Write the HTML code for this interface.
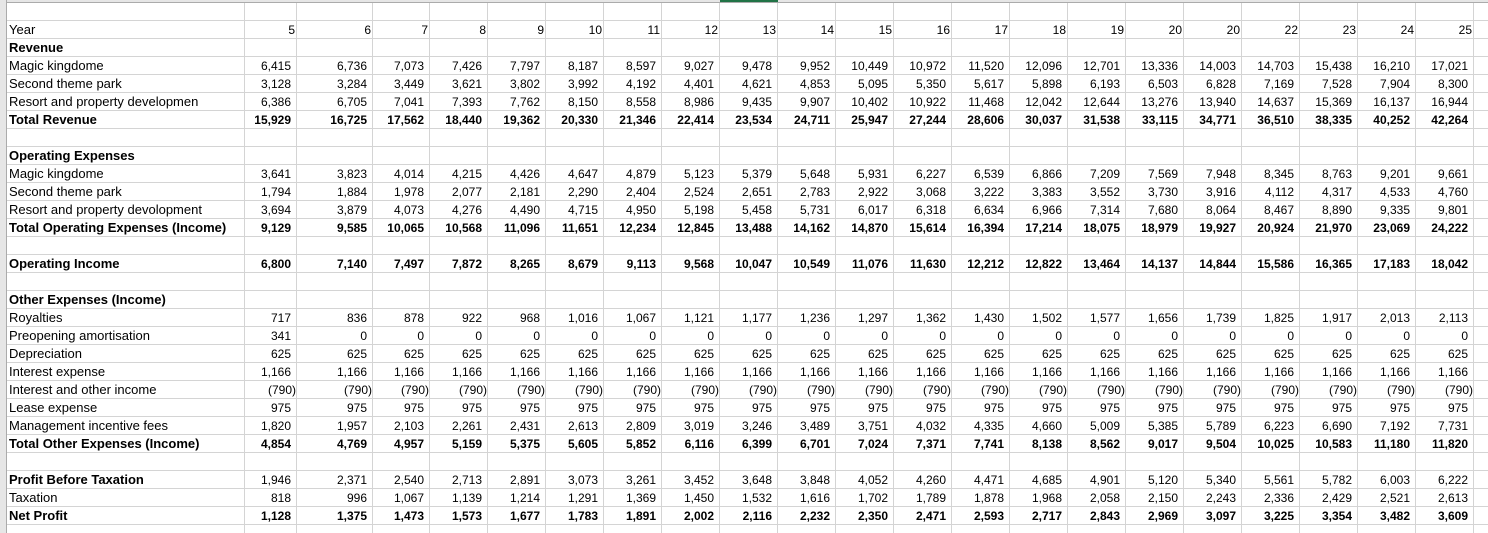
<!DOCTYPE html>
<html><head><meta charset="utf-8">
<style>
html,body{margin:0;padding:0;background:#fff;width:1488px;height:533px;overflow:hidden;position:relative;font-family:"Liberation Sans",Arial,sans-serif;color:#000}
.top{position:absolute;left:0;top:0;width:1488px;height:2px;background:#e6e6e6;border-bottom:1px solid #ababab}
.green{position:absolute;left:720px;top:0;width:58px;height:2px;background:#217346}
.left{position:absolute;left:0;top:0;width:6px;height:533px;background:#e6e6e6;border-right:1px solid #ababab}
.hl{position:absolute;left:7px;top:3px;width:1481px;height:530px;background:repeating-linear-gradient(to bottom,transparent 0,transparent 17px,#d4d4d4 17px,#d4d4d4 18px)}
.v{position:absolute;top:3px;height:530px;width:1px;background:#d4d4d4}
.g{position:absolute;left:7px;top:3px;display:grid;grid-template-columns:238px 52px 76px 57px repeat(18,58px) 14px;grid-auto-rows:18px;font-size:12px}
.g>div>div{line-height:18px;height:18px;text-align:right;padding-right:6px;white-space:nowrap;overflow:visible;box-sizing:border-box}
.r{display:contents}
.g>div>div.l{text-align:left;padding-left:2px;padding-right:0;font-size:13px}
.b>div{font-weight:bold}
.h>div{padding-right:2px!important}
.p>div{padding-right:1px!important}
.e{grid-column:1/-1}
</style></head><body>
<div class="hl"></div>
<div class="top"></div><div class="green"></div>
<div class="left"></div>
<div class="v" style="left:244px"></div><div class="v" style="left:296px"></div><div class="v" style="left:372px"></div><div class="v" style="left:429px"></div>
<div class="v" style="left:487px"></div><div class="v" style="left:545px"></div><div class="v" style="left:603px"></div><div class="v" style="left:661px"></div><div class="v" style="left:719px"></div><div class="v" style="left:777px"></div><div class="v" style="left:835px"></div><div class="v" style="left:893px"></div><div class="v" style="left:951px"></div><div class="v" style="left:1009px"></div><div class="v" style="left:1067px"></div><div class="v" style="left:1125px"></div><div class="v" style="left:1183px"></div><div class="v" style="left:1241px"></div><div class="v" style="left:1299px"></div><div class="v" style="left:1357px"></div><div class="v" style="left:1415px"></div><div class="v" style="left:1473px"></div>
<div class="g">
<div class="r"><div class="e"></div></div>
<div class="r h"><div class="l">Year</div><div>5</div><div>6</div><div>7</div><div>8</div><div>9</div><div>10</div><div>11</div><div>12</div><div>13</div><div>14</div><div>15</div><div>16</div><div>17</div><div>18</div><div>19</div><div>20</div><div>20</div><div>22</div><div>23</div><div>24</div><div>25</div><div></div></div>
<div class="r b"><div class="l e">Revenue</div></div>
<div class="r"><div class="l">Magic kingdome</div><div>6,415</div><div>6,736</div><div>7,073</div><div>7,426</div><div>7,797</div><div>8,187</div><div>8,597</div><div>9,027</div><div>9,478</div><div>9,952</div><div>10,449</div><div>10,972</div><div>11,520</div><div>12,096</div><div>12,701</div><div>13,336</div><div>14,003</div><div>14,703</div><div>15,438</div><div>16,210</div><div>17,021</div><div></div></div>
<div class="r"><div class="l">Second theme park</div><div>3,128</div><div>3,284</div><div>3,449</div><div>3,621</div><div>3,802</div><div>3,992</div><div>4,192</div><div>4,401</div><div>4,621</div><div>4,853</div><div>5,095</div><div>5,350</div><div>5,617</div><div>5,898</div><div>6,193</div><div>6,503</div><div>6,828</div><div>7,169</div><div>7,528</div><div>7,904</div><div>8,300</div><div></div></div>
<div class="r"><div class="l">Resort and property developmen</div><div>6,386</div><div>6,705</div><div>7,041</div><div>7,393</div><div>7,762</div><div>8,150</div><div>8,558</div><div>8,986</div><div>9,435</div><div>9,907</div><div>10,402</div><div>10,922</div><div>11,468</div><div>12,042</div><div>12,644</div><div>13,276</div><div>13,940</div><div>14,637</div><div>15,369</div><div>16,137</div><div>16,944</div><div></div></div>
<div class="r b"><div class="l">Total Revenue</div><div>15,929</div><div>16,725</div><div>17,562</div><div>18,440</div><div>19,362</div><div>20,330</div><div>21,346</div><div>22,414</div><div>23,534</div><div>24,711</div><div>25,947</div><div>27,244</div><div>28,606</div><div>30,037</div><div>31,538</div><div>33,115</div><div>34,771</div><div>36,510</div><div>38,335</div><div>40,252</div><div>42,264</div><div></div></div>
<div class="r"><div class="e"></div></div>
<div class="r b"><div class="l e">Operating Expenses</div></div>
<div class="r"><div class="l">Magic kingdome</div><div>3,641</div><div>3,823</div><div>4,014</div><div>4,215</div><div>4,426</div><div>4,647</div><div>4,879</div><div>5,123</div><div>5,379</div><div>5,648</div><div>5,931</div><div>6,227</div><div>6,539</div><div>6,866</div><div>7,209</div><div>7,569</div><div>7,948</div><div>8,345</div><div>8,763</div><div>9,201</div><div>9,661</div><div></div></div>
<div class="r"><div class="l">Second theme park</div><div>1,794</div><div>1,884</div><div>1,978</div><div>2,077</div><div>2,181</div><div>2,290</div><div>2,404</div><div>2,524</div><div>2,651</div><div>2,783</div><div>2,922</div><div>3,068</div><div>3,222</div><div>3,383</div><div>3,552</div><div>3,730</div><div>3,916</div><div>4,112</div><div>4,317</div><div>4,533</div><div>4,760</div><div></div></div>
<div class="r"><div class="l">Resort and property devolopment</div><div>3,694</div><div>3,879</div><div>4,073</div><div>4,276</div><div>4,490</div><div>4,715</div><div>4,950</div><div>5,198</div><div>5,458</div><div>5,731</div><div>6,017</div><div>6,318</div><div>6,634</div><div>6,966</div><div>7,314</div><div>7,680</div><div>8,064</div><div>8,467</div><div>8,890</div><div>9,335</div><div>9,801</div><div></div></div>
<div class="r b"><div class="l">Total Operating Expenses (Income)</div><div>9,129</div><div>9,585</div><div>10,065</div><div>10,568</div><div>11,096</div><div>11,651</div><div>12,234</div><div>12,845</div><div>13,488</div><div>14,162</div><div>14,870</div><div>15,614</div><div>16,394</div><div>17,214</div><div>18,075</div><div>18,979</div><div>19,927</div><div>20,924</div><div>21,970</div><div>23,069</div><div>24,222</div><div></div></div>
<div class="r"><div class="e"></div></div>
<div class="r b"><div class="l">Operating Income</div><div>6,800</div><div>7,140</div><div>7,497</div><div>7,872</div><div>8,265</div><div>8,679</div><div>9,113</div><div>9,568</div><div>10,047</div><div>10,549</div><div>11,076</div><div>11,630</div><div>12,212</div><div>12,822</div><div>13,464</div><div>14,137</div><div>14,844</div><div>15,586</div><div>16,365</div><div>17,183</div><div>18,042</div><div></div></div>
<div class="r"><div class="e"></div></div>
<div class="r b"><div class="l e">Other Expenses (Income)</div></div>
<div class="r"><div class="l">Royalties</div><div>717</div><div>836</div><div>878</div><div>922</div><div>968</div><div>1,016</div><div>1,067</div><div>1,121</div><div>1,177</div><div>1,236</div><div>1,297</div><div>1,362</div><div>1,430</div><div>1,502</div><div>1,577</div><div>1,656</div><div>1,739</div><div>1,825</div><div>1,917</div><div>2,013</div><div>2,113</div><div></div></div>
<div class="r"><div class="l">Preopening amortisation</div><div>341</div><div>0</div><div>0</div><div>0</div><div>0</div><div>0</div><div>0</div><div>0</div><div>0</div><div>0</div><div>0</div><div>0</div><div>0</div><div>0</div><div>0</div><div>0</div><div>0</div><div>0</div><div>0</div><div>0</div><div>0</div><div></div></div>
<div class="r"><div class="l">Depreciation</div><div>625</div><div>625</div><div>625</div><div>625</div><div>625</div><div>625</div><div>625</div><div>625</div><div>625</div><div>625</div><div>625</div><div>625</div><div>625</div><div>625</div><div>625</div><div>625</div><div>625</div><div>625</div><div>625</div><div>625</div><div>625</div><div></div></div>
<div class="r"><div class="l">Interest expense</div><div>1,166</div><div>1,166</div><div>1,166</div><div>1,166</div><div>1,166</div><div>1,166</div><div>1,166</div><div>1,166</div><div>1,166</div><div>1,166</div><div>1,166</div><div>1,166</div><div>1,166</div><div>1,166</div><div>1,166</div><div>1,166</div><div>1,166</div><div>1,166</div><div>1,166</div><div>1,166</div><div>1,166</div><div></div></div>
<div class="r p"><div class="l">Interest and other income</div><div>(790)</div><div>(790)</div><div>(790)</div><div>(790)</div><div>(790)</div><div>(790)</div><div>(790)</div><div>(790)</div><div>(790)</div><div>(790)</div><div>(790)</div><div>(790)</div><div>(790)</div><div>(790)</div><div>(790)</div><div>(790)</div><div>(790)</div><div>(790)</div><div>(790)</div><div>(790)</div><div>(790)</div><div></div></div>
<div class="r"><div class="l">Lease expense</div><div>975</div><div>975</div><div>975</div><div>975</div><div>975</div><div>975</div><div>975</div><div>975</div><div>975</div><div>975</div><div>975</div><div>975</div><div>975</div><div>975</div><div>975</div><div>975</div><div>975</div><div>975</div><div>975</div><div>975</div><div>975</div><div></div></div>
<div class="r"><div class="l">Management incentive fees</div><div>1,820</div><div>1,957</div><div>2,103</div><div>2,261</div><div>2,431</div><div>2,613</div><div>2,809</div><div>3,019</div><div>3,246</div><div>3,489</div><div>3,751</div><div>4,032</div><div>4,335</div><div>4,660</div><div>5,009</div><div>5,385</div><div>5,789</div><div>6,223</div><div>6,690</div><div>7,192</div><div>7,731</div><div></div></div>
<div class="r b"><div class="l">Total Other Expenses (Income)</div><div>4,854</div><div>4,769</div><div>4,957</div><div>5,159</div><div>5,375</div><div>5,605</div><div>5,852</div><div>6,116</div><div>6,399</div><div>6,701</div><div>7,024</div><div>7,371</div><div>7,741</div><div>8,138</div><div>8,562</div><div>9,017</div><div>9,504</div><div>10,025</div><div>10,583</div><div>11,180</div><div>11,820</div><div></div></div>
<div class="r"><div class="e"></div></div>
<div class="r"><div class="l" style="font-weight:bold">Profit Before Taxation</div><div>1,946</div><div>2,371</div><div>2,540</div><div>2,713</div><div>2,891</div><div>3,073</div><div>3,261</div><div>3,452</div><div>3,648</div><div>3,848</div><div>4,052</div><div>4,260</div><div>4,471</div><div>4,685</div><div>4,901</div><div>5,120</div><div>5,340</div><div>5,561</div><div>5,782</div><div>6,003</div><div>6,222</div><div></div></div>
<div class="r"><div class="l">Taxation</div><div>818</div><div>996</div><div>1,067</div><div>1,139</div><div>1,214</div><div>1,291</div><div>1,369</div><div>1,450</div><div>1,532</div><div>1,616</div><div>1,702</div><div>1,789</div><div>1,878</div><div>1,968</div><div>2,058</div><div>2,150</div><div>2,243</div><div>2,336</div><div>2,429</div><div>2,521</div><div>2,613</div><div></div></div>
<div class="r b"><div class="l">Net Profit</div><div>1,128</div><div>1,375</div><div>1,473</div><div>1,573</div><div>1,677</div><div>1,783</div><div>1,891</div><div>2,002</div><div>2,116</div><div>2,232</div><div>2,350</div><div>2,471</div><div>2,593</div><div>2,717</div><div>2,843</div><div>2,969</div><div>3,097</div><div>3,225</div><div>3,354</div><div>3,482</div><div>3,609</div><div></div></div>
</div>
</body></html>
